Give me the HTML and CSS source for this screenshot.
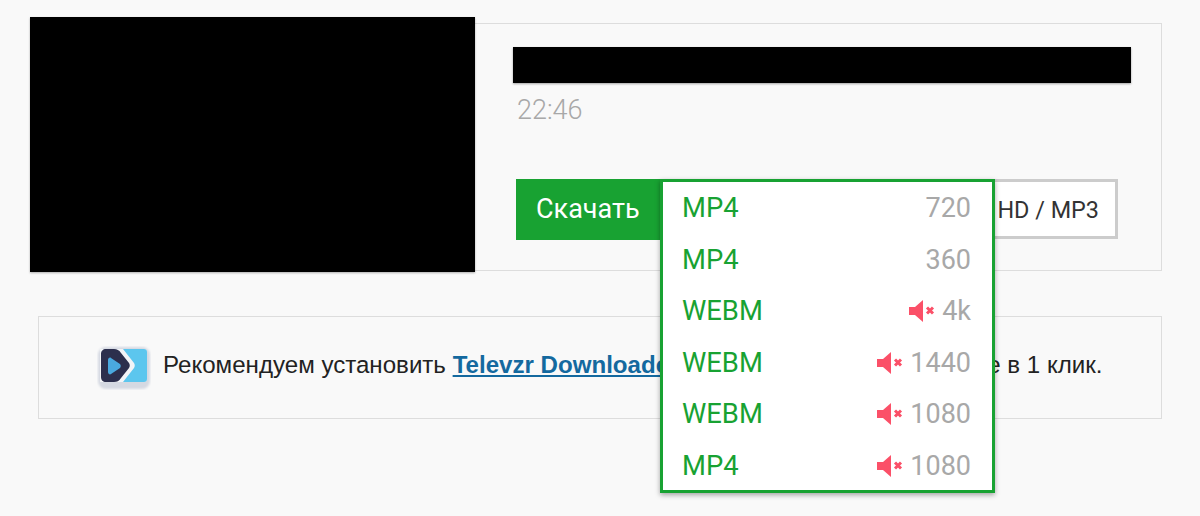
FILE: index.html
```html
<!DOCTYPE html>
<html lang="ru">
<head>
<meta charset="utf-8">
<title>Скачать</title>
<link rel="stylesheet" href="styles.css">
</head>
<body>
<svg class="defs" width="0" height="0" aria-hidden="true">
  <symbol id="muted" viewBox="0 0 26 22">
    <path d="M0 7h6l8-7v22l-8-7H0z" fill="#fb5068"/>
    <path d="M18 7.500l6 6m0-6l-6 6" stroke="#fb5068" stroke-width="3" fill="none"/>
  </symbol>
  <filter id="soft"><feGaussianBlur stdDeviation="1"/></filter>
</svg>
<main class="page">
  <section class="card">
    <div class="thumb"></div>
    <div class="info">
      <div class="title"></div>
      <div class="duration">22:46</div>
      <div class="actions">
        <div class="download">Скачать</div>
        <div class="more">HD / MP3</div>
        <ul class="menu">
          <li class="row"><span class="fmt">MP4</span><span class="res">720</span></li>
          <li class="row"><span class="fmt">MP4</span><span class="res">360</span></li>
          <li class="row"><span class="fmt">WEBM</span><span class="res"><svg class="mute"><use href="#muted"/></svg>4k</span></li>
          <li class="row"><span class="fmt">WEBM</span><span class="res"><svg class="mute"><use href="#muted"/></svg>1440</span></li>
          <li class="row"><span class="fmt">WEBM</span><span class="res"><svg class="mute"><use href="#muted"/></svg>1080</span></li>
          <li class="row"><span class="fmt">MP4</span><span class="res"><svg class="mute"><use href="#muted"/></svg>1080</span></li>
        </ul>
      </div>
    </div>
  </section>
  <section class="notice">
    <svg class="logo" viewBox="0 0 54 44" aria-hidden="true">
      <rect x="1" y="1" width="52" height="42" rx="8" fill="#d5d9e2" filter="url(#soft)"/>
      <path d="M3 3h44a3 3 0 0 1 3 3v27a3 3 0 0 1-3 3H3z" fill="#f2f4f7"/>
      <path d="M26 3h21a3 3 0 0 1 3 3v27a3 3 0 0 1-3 3H26l11-14c1-2 1-3 0-5z" fill="#5cc6ee"/>
      <path d="M9 3h8c3 0 5 1 7 4l8 10c1 2 1 3 0 5l-8 10c-2 3-4 4-7 4H9c-3 0-5-2-5-5V8c0-3 2-5 5-5z" fill="#2c2f4d"/>
      <path d="M11 14c0-2 2-3 3-2l9 6c1 1 1 3 0 4l-9 6c-1 1-3 0-3-2z" fill="#4aa9df"/>
    </svg>
    <p class="notice-text">Рекомендуем установить <a class="notice-link" href="#">Televzr Downloader</a> и скачивай видео с YouTube в 1 клик.</p>
  </section>
</main>
</body>
</html>
```
FILE: styles.css
```css
* { box-sizing: border-box; }
html, body { margin: 0; height: 100%; }
body { background: #f9f9f9; overflow: hidden; font-family: Roboto, sans-serif; }
.defs { display: block; height: 0; }
.page { padding: 23px 38px 0; }
.card {
  display: flex;
  height: 248px;
  border: 1px solid #dddddd;
}
.thumb {
  flex: 0 0 445px;
  height: 255px;
  margin: -7px 0 0 -9px;
  background: #000;
  box-shadow: 0 1px 2px rgba(0,0,0,.3);
}
.info { flex: 1; min-width: 0; padding: 23px 30px 0 38px; }
.title {
  height: 36px;
  background: #000;
  box-shadow: 0 1px 2px rgba(0,0,0,.35);
}
.duration {
  margin: 12px 0 0 4px;
  font-size: 27px;
  font-weight: 300;
  line-height: 30px;
  color: #a8a8a8;
}
.actions {
  position: relative;
  display: flex;
  margin: 54px 13px 0 3px;
  height: 61px;
}
.download {
  flex: 0 0 150px;
  padding-left: 20px;
  background: #18a232;
  color: #fff;
  font-size: 27px;
  line-height: 61px;
}
.more {
  flex: 1;
  height: 60px;
  border: 3px solid #cccccc;
  background: #fff;
  color: #333;
  font-size: 23.400px;
  line-height: 56px;
  text-align: right;
  padding-right: 16px;
}
.menu {
  position: absolute;
  left: 144px;
  top: 0;
  width: 335px;
  margin: 0;
  padding: 0.500px 21px 0 19px;
  height: 314px;
  list-style: none;
  background: #fff;
  border: 3px solid #18a232;
  box-shadow: 0 2px 5px rgba(0,0,0,.35);
}
.row {
  display: flex;
  justify-content: space-between;
  align-items: center;
  height: 51.500px;
  font-size: 27px;
}
.fmt { color: #18a232; font-size: 27.400px; }
.res { display: flex; align-items: center; color: #a8a8a8; }
.mute { width: 26px; height: 22px; margin-right: 7px; }
.notice {
  display: flex;
  align-items: center;
  height: 103px;
  margin-top: 45px;
  padding-left: 58px;
  border: 1px solid #dddddd;
}
.logo { width: 54px; height: 44px; margin-right: 12px; flex: none; }
.notice-text {
  margin: 0 0 5px;
  font-family: "Liberation Sans", Arial, sans-serif;
  font-size: 24.100px;
  color: #222;
  white-space: nowrap;
}
.notice-link { color: #14699f; font-weight: 700; }
```
